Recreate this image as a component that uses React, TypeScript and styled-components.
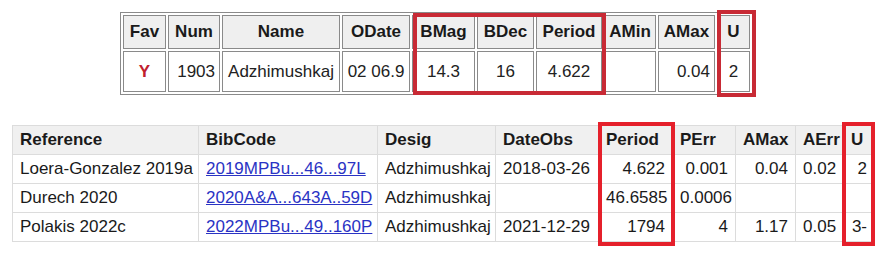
import React from "react";
import styled, { createGlobalStyle } from "styled-components";

const GlobalStyle = createGlobalStyle`
  body {
    margin: 0;
    background: #fff;
    font-family: "Liberation Sans", Arial, sans-serif;
    color: #111;
  }
`;

const Page = styled.div`
  width: 886px;
  height: 255px;
  padding-top: 12px;
  box-sizing: border-box;
`;

const TopWrap = styled.div`
  position: relative;
  margin-left: 120px;
  width: 633px;
`;

const SummaryTable = styled.table`
  border: 1px solid #8a8a8a;
  border-spacing: 2px;
  table-layout: fixed;
  font-size: 17px;
`;

const SumTh = styled.th<{ $w: number }>`
  width: ${(p) => p.$w}px;
  box-sizing: border-box;
  height: 34px;
  padding: 0;
  border: 1px solid #8a8a8a;
  background: #efefef;
  font-weight: bold;
  color: #1a1a1a;
  text-align: center;
  white-space: nowrap;
`;

const SumTd = styled.td<{ $align?: string }>`
  height: 41px;
  box-sizing: border-box;
  padding: 0 4px;
  border: 1px solid #8a8a8a;
  text-align: ${(p) => p.$align || "center"};
  color: #222;
  white-space: nowrap;
`;

const FavMark = styled.span`
  color: #c0202e;
  font-weight: bold;
`;

const Highlight = styled.div<{ $x: number; $y: number; $w: number; $h: number; $c: string }>`
  position: absolute;
  left: ${(p) => p.$x}px;
  top: ${(p) => p.$y}px;
  width: ${(p) => p.$w}px;
  height: ${(p) => p.$h}px;
  border: 4px solid ${(p) => p.$c};
  box-sizing: border-box;
  pointer-events: none;
`;

const BottomWrap = styled.div`
  position: relative;
  margin-left: 12px;
  margin-top: 30px;
  width: 862px;
`;

const RefTable = styled.table`
  border-collapse: collapse;
  table-layout: fixed;
  width: 862px;
  font-size: 17px;
`;

const RefTh = styled.th<{ $w: number }>`
  width: ${(p) => p.$w}px;
  height: 29px;
  padding: 0 7px;
  box-sizing: border-box;
  background: #f0f0f0;
  border: 1px solid #dcdcdc;
  text-align: left;
  font-weight: bold;
  color: #1a1a1a;
  white-space: nowrap;
`;

const RefTd = styled.td<{ $num?: boolean }>`
  height: 29px;
  padding: 0 7px;
  box-sizing: border-box;
  border: 1px solid #dcdcdc;
  text-align: ${(p) => (p.$num ? "right" : "left")};
  color: #1a1a1a;
  white-space: nowrap;
  overflow: hidden;
`;

const BibLink = styled.a`
  color: #2a33c4;
  text-decoration: underline;
`;

const summaryCols = [
  { name: "Fav", w: 43 },
  { name: "Num", w: 52 },
  { name: "Name", w: 118 },
  { name: "ODate", w: 68 },
  { name: "BMag", w: 63 },
  { name: "BDec", w: 57 },
  { name: "Period", w: 66 },
  { name: "AMin", w: 52 },
  { name: "AMax", w: 57 },
  { name: "U", w: 33 },
];

const refCols = [
  { name: "Reference", w: 186 },
  { name: "BibCode", w: 179 },
  { name: "Desig", w: 118 },
  { name: "DateObs", w: 103 },
  { name: "Period", w: 74 },
  { name: "PErr", w: 63 },
  { name: "AMax", w: 60 },
  { name: "AErr", w: 48 },
  { name: "U", w: 31 },
];

const refs = [
  ["Loera-Gonzalez 2019a", "2019MPBu...46...97L", "Adzhimushkaj", "2018-03-26", "4.622", "0.001", "0.04", "0.02", "2"],
  ["Durech 2020", "2020A&A...643A..59D", "Adzhimushkaj", "", "46.6585", "0.0006", "", "", ""],
  ["Polakis 2022c", "2022MPBu...49..160P", "Adzhimushkaj", "2021-12-29", "1794", "4", "1.17", "0.05", "3-"],
];

export default function App() {
  return (
    <Page>
      <GlobalStyle />
      <TopWrap>
        <SummaryTable>
          <thead>
            <tr>
              {summaryCols.map((c) => (
                <SumTh key={c.name} $w={c.w}>
                  {c.name}
                </SumTh>
              ))}
            </tr>
          </thead>
          <tbody>
            <tr>
              <SumTd>
                <FavMark>Y</FavMark>
              </SumTd>
              <SumTd $align="right">1903</SumTd>
              <SumTd>Adzhimushkaj</SumTd>
              <SumTd>02 06.9</SumTd>
              <SumTd>14.3</SumTd>
              <SumTd>16</SumTd>
              <SumTd>4.622</SumTd>
              <SumTd></SumTd>
              <SumTd $align="right">0.04</SumTd>
              <SumTd>2</SumTd>
            </tr>
          </tbody>
        </SummaryTable>
        <Highlight $x={293} $y={1} $w={193} $h={82} $c="#c82a35" />
        <Highlight $x={597} $y={-2} $w={39} $h={87} $c="#c82a35" />
      </TopWrap>
      <BottomWrap>
        <RefTable>
          <thead>
            <tr>
              {refCols.map((c) => (
                <RefTh key={c.name} $w={c.w}>
                  {c.name}
                </RefTh>
              ))}
            </tr>
          </thead>
          <tbody>
            {refs.map((r) => (
              <tr key={r[0]}>
                <RefTd>{r[0]}</RefTd>
                <RefTd>
                  <BibLink href="#">{r[1]}</BibLink>
                </RefTd>
                <RefTd>{r[2]}</RefTd>
                <RefTd>{r[3]}</RefTd>
                {r.slice(4).map((v, i) => (
                  <RefTd key={i} $num>
                    {v}
                  </RefTd>
                ))}
              </tr>
            ))}
          </tbody>
        </RefTable>
        <Highlight $x={586} $y={-3} $w={77} $h={124} $c="#e5202b" />
        <Highlight $x={830} $y={-3} $w={33} $h={124} $c="#e5202b" />
      </BottomWrap>
    </Page>
  );
}
